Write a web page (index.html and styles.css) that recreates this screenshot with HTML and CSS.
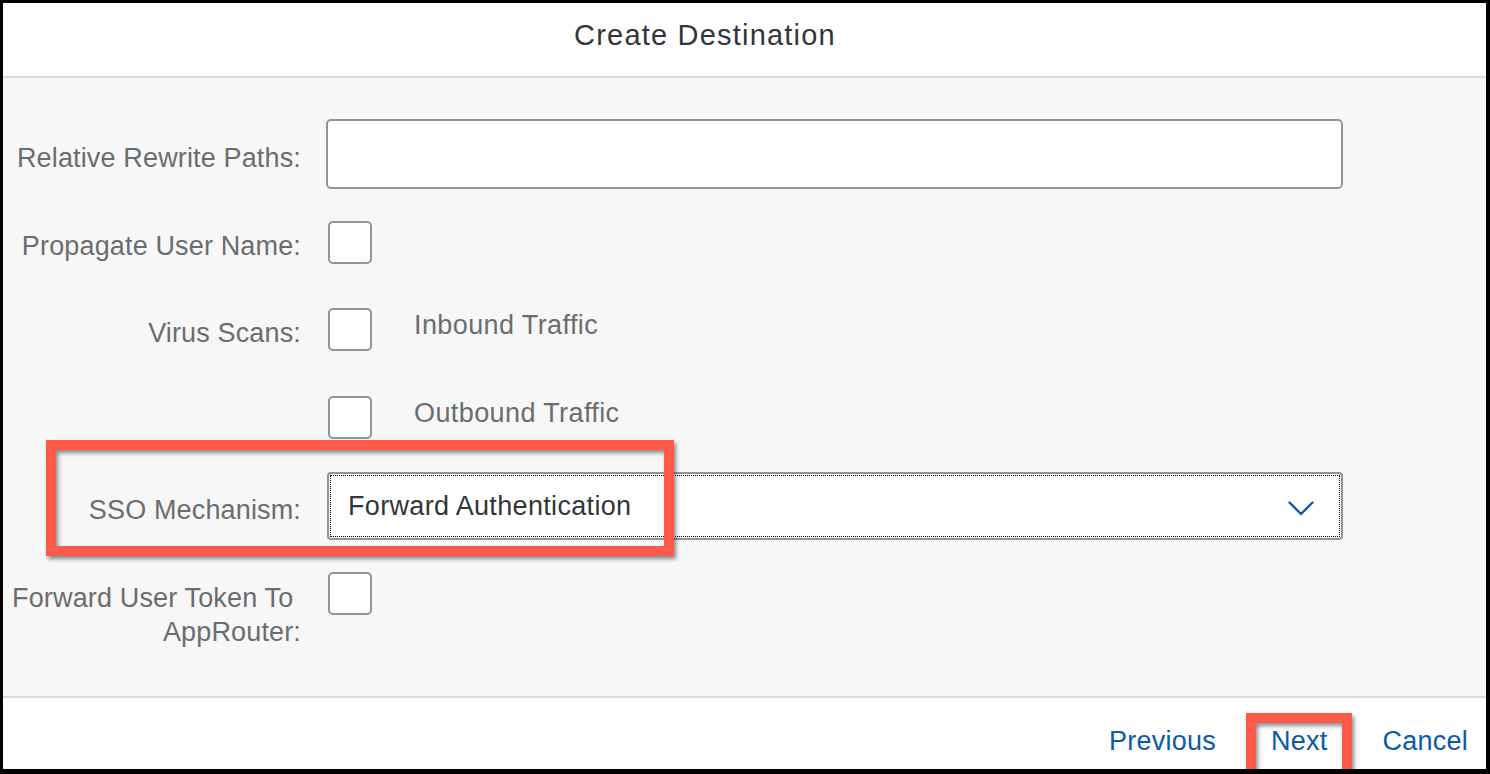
FILE: index.html
```html
<!DOCTYPE html>
<html lang="en">
<head>
<meta charset="utf-8">
<title>Create Destination</title>
<link rel="stylesheet" href="styles.css">
</head>
<body>
<div class="frame">
  <header class="dlg-header">
    <h1 class="dlg-title">Create Destination</h1>
  </header>
  <main class="dlg-body">
    <div class="row row-input">
      <label class="lbl">Relative Rewrite Paths:</label>
      <div class="ctl"><div class="input"></div></div>
    </div>
    <div class="row row-check">
      <label class="lbl">Propagate User Name:</label>
      <div class="ctl"><span class="cb"></span></div>
    </div>
    <div class="row row-check row-virus">
      <label class="lbl">Virus Scans:</label>
      <div class="ctl"><span class="cb"></span><span class="cb-text">Inbound Traffic</span></div>
    </div>
    <div class="row row-check row-outbound">
      <div class="lbl"></div>
      <div class="ctl"><span class="cb"></span><span class="cb-text">Outbound Traffic</span></div>
    </div>
    <div class="row row-select">
      <label class="lbl">SSO Mechanism:</label>
      <div class="ctl">
        <div class="select">
          <span class="select-value">Forward Authentication</span>
          <svg class="chevron" width="26" height="15" viewBox="0 0 26 15" aria-hidden="true">
            <polyline points="1.5,1.5 13,13 24.5,1.5" fill="none" stroke="currentColor" stroke-width="2.4" stroke-linecap="round" stroke-linejoin="round"/>
          </svg>
        </div>
      </div>
    </div>
    <div class="row row-check row-token">
      <label class="lbl">Forward User Token To&nbsp;<br>AppRouter:</label>
      <div class="ctl"><span class="cb"></span></div>
    </div>
    <div class="highlight hl-sso"></div>
  </main>
  <footer class="dlg-footer">
    <button class="btn" type="button">Previous</button>
    <button class="btn btn-next" type="button">Next<span class="highlight hl-next"></span></button>
    <button class="btn" type="button">Cancel</button>
  </footer>
</div>
</body>
</html>
```

FILE: styles.css
```css
* { box-sizing: border-box; }

html, body {
  margin: 0;
  padding: 0;
  background: #000;
}

body {
  font-family: "Liberation Sans", Arial, Helvetica, sans-serif;
}

.frame {
  width: 1490px;
  height: 774px;
  border-style: solid;
  border-color: #000;
  border-width: 3px 4px 5px 3px;
  background: #f7f7f7;
  display: flex;
  flex-direction: column;
  overflow: hidden;
  position: relative;
}

/* Header */
.dlg-header {
  height: 75px;
  flex: none;
  background: #fff;
  border-bottom: 2px solid #dadada;
  padding-top: 15px;
  padding-right: 79px;
  text-align: center;
}

.dlg-title {
  margin: 0;
  font-weight: normal;
  font-size: 29px;
  line-height: 34px;
  letter-spacing: 1.2px;
  color: #32363a;
}

/* Body */
.dlg-body {
  flex: 1;
  position: relative;
  padding-top: 41px;
  background: #f7f7f7;
}

.row {
  display: flex;
  align-items: flex-start;
  column-gap: 25px;
}

.lbl {
  width: 298px;
  flex: none;
  text-align: right;
  font-size: 27px;
  line-height: 34px;
  letter-spacing: 0.15px;
  color: #6a6d70;
  padding-left: 4px;
}

.ctl {
  width: 1017px;
  display: flex;
  align-items: flex-start;
}

.row-input { height: 70px; }
.row-input .lbl { padding-top: 22px; }

.row-check { height: 43px; }
.row-check .lbl { padding-top: 8px; }

.row + .row-check { margin-top: 32px; }
.row-virus { margin-top: 44px !important; }
.row-outbound { margin-top: 45px !important; }

.row-select { height: 68px; margin-top: 33px; }
.row-select .lbl { padding-top: 21px; }

.row-token .lbl { padding-top: 9px; }

.input {
  width: 1017px;
  height: 70px;
  background: #fff;
  border: 2px solid #8d959e;
  border-radius: 5px;
}

.cb {
  width: 44px;
  height: 43px;
  margin-left: 2px;
  background: #fff;
  border: 2px solid #8d959e;
  border-radius: 5px;
  flex: none;
}

.cb-text {
  margin-left: 42px;
  font-size: 27px;
  line-height: 34px;
  letter-spacing: 0.4px;
  color: #6a6d70;
}

.select {
  width: 1016px;
  height: 68px;
  margin-left: 1px;
  background: #fff;
  border: 2px solid #8d959e;
  border-radius: 4px;
  outline: 1px dotted #000;
  outline-offset: -4px;
  display: flex;
  align-items: center;
  padding-left: 19px;
  padding-right: 27px;
}

.select-value {
  flex: 1;
  font-size: 27px;
  line-height: 34px;
  letter-spacing: 0.33px;
  color: #32363a;
  padding-bottom: 1px;
}

.chevron {
  color: #0b5aa6;
  margin-top: 4px;
}

/* Footer */
.dlg-footer {
  height: 73px;
  flex: none;
  background: #fff;
  border-top: 2px solid #dadada;
  display: flex;
  justify-content: flex-end;
  align-items: flex-start;
  column-gap: 55px;
  padding-top: 26px;
  padding-right: 18px;
}

.btn {
  position: relative;
  background: none;
  border: 0;
  padding: 0;
  margin: 0;
  font-family: inherit;
  font-size: 27px;
  line-height: 34px;
  letter-spacing: 0.25px;
  color: #0b5aa6;
  cursor: pointer;
}

/* Annotation highlights */
.highlight {
  position: absolute;
  border: 10px solid #fc5a4b;
  box-shadow: 2px 3px 4px rgba(0, 0, 0, 0.45), inset 2px 3px 4px rgba(0, 0, 0, 0.45);
  pointer-events: none;
}

.hl-sso {
  top: 362px;
  left: 43px;
  width: 628px;
  height: 116px;
}

.hl-next {
  top: -11px;
  left: -25px;
  width: 106px;
  height: 80px;
}
```
